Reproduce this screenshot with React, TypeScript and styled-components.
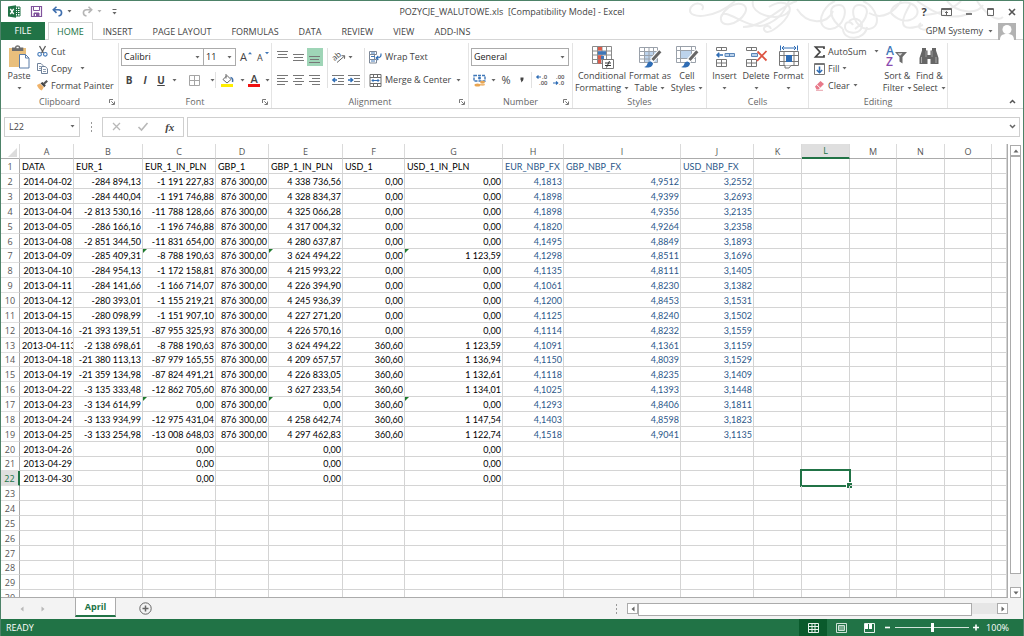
import React from "react";
import styled, { createGlobalStyle, css } from "styled-components";

const GREEN = "#217346";
const INK = "#444444";
const UI = '"Open Sans", "Noto Sans", sans-serif';
const CELL = 'Lato, "Open Sans", sans-serif';

const GlobalStyle = createGlobalStyle`
  * { box-sizing: border-box; }
  body { margin: 0; font-family: ${UI}; font-size: 9px; line-height: 12px; color: ${INK}; background: #fff; }
  button, select, input { font: inherit; color: inherit; margin: 0; padding: 0; border: 0; border-radius: 0; background: none; }
  button { white-space: nowrap; }
  svg { display: block; flex: none; overflow: visible; }
`;

/* ---------- frame ---------- */

const Window = styled.div`
  display: flex;
  flex-direction: column;
  height: 100vh;
  border: 1px solid #4d8268;
  border-bottom: 0;
  overflow: hidden;
`;

const Header = styled.header`
  position: relative;
  flex: none;
`;

const Swirls = styled.svg`
  position: absolute;
  top: 0;
  right: 0;
  overflow: hidden;
  fill: none;
  stroke: #ebebeb;
  stroke-width: 2;
`;

const TitleBar = styled.div`
  position: relative;
  display: grid;
  grid-template-columns: 1fr auto 1fr;
  align-items: center;
  height: 21px;
`;

const QuickAccess = styled.div`
  display: flex;
  align-items: center;
  gap: 10px;
  padding-left: 7px;
`;

const Title = styled.h1`
  margin: 0;
  font-size: 9px;
  line-height: 12px;
  font-weight: 400;
  white-space: pre;
`;

const WindowButtons = styled.div`
  display: flex;
  justify-content: flex-end;
  align-items: center;
  gap: 12px;
  padding-right: 6px;
`;

const BareButton = styled.button`
  display: flex;
  align-items: center;
  justify-content: center;
  gap: 4px;
`;

const HelpButton = styled(BareButton)`
  font-size: 11px;
  font-weight: 700;
  width: 10px;
`;

const TabBar = styled.nav`
  position: relative;
  display: flex;
  height: 18px;
  border-bottom: 1px solid #d5d5d5;
`;

const Tab = styled.button<{ $active?: boolean }>`
  position: relative;
  height: 18px;
  padding: 0 9px;
  line-height: 16px;
  border: 1px solid transparent;
  border-bottom: 0;
  ${(p) => p.$active && css`
    margin-left: 3px;
    padding: 0 8px;
    color: ${GREEN};
    background: #fff;
    border-color: #d5d5d5;
  `}
`;

const FileTab = styled.button`
  width: 44px;
  height: 18px;
  color: #fff;
  background: ${GREEN};
`;

const Account = styled.button`
  display: flex;
  align-items: center;
  gap: 5px;
  margin-left: auto;
  padding-right: 7px;
  height: 18px;
`;

/* ---------- ribbon ---------- */

const Ribbon = styled.section`
  display: grid;
  grid-template-columns: 118px 153px 197px 104px 134px 102px 139px 1fr;
  flex: none;
  height: 69px;
  padding-top: 3px;
  border-bottom: 1px solid #d5d5d5;
`;

const Group = styled.div`
  display: grid;
  grid-template-rows: 52px 13px;
  border-right: 1px solid #e4e4e4;
`;

const GroupFoot = styled.div`
  display: grid;
  grid-template-columns: 12px 1fr 12px;
  align-items: center;
  justify-items: center;
  color: #666;
`;

const GroupTitle = styled.span`
  grid-column: 2;
`;

const Body = styled.div<{ $gap?: number; $pad?: string }>`
  display: flex;
  align-items: flex-start;
  gap: ${(p) => p.$gap ?? 0}px;
  padding: ${(p) => p.$pad ?? "0"};
`;

const Rows = styled.div<{ $gap?: number }>`
  display: flex;
  flex-direction: column;
  gap: ${(p) => p.$gap ?? 0}px;
`;

const Row = styled.div<{ $gap?: number }>`
  display: flex;
  align-items: center;
  height: 18px;
  gap: ${(p) => p.$gap ?? 5}px;
`;

const LabelButton = styled.button`
  display: flex;
  align-items: center;
  gap: 3px;
  height: 17px;
`;

const BigButton = styled.button<{ $w: number }>`
  display: flex;
  flex-direction: column;
  align-items: center;
  width: ${(p) => p.$w}px;
  padding-top: 2px;
  svg + span { margin-top: 1px; }
`;

const Line = styled.span`
  display: flex;
  align-items: center;
  gap: 3px;
  height: 12px;
`;

const Tool = styled.button<{ $w?: number; $on?: boolean }>`
  display: flex;
  align-items: center;
  justify-content: center;
  flex: none;
  width: ${(p) => p.$w ?? 16}px;
  height: 18px;
  background: ${(p) => (p.$on ? "#9fd5b7" : "none")};
`;

const Divider = styled.span<{ $tall?: boolean }>`
  flex: none;
  width: 1px;
  height: ${(p) => (p.$tall ? 40 : 16)}px;
  background: #e1e1e1;
`;

const Picker = styled.label<{ $w: number }>`
  display: grid;
  align-items: center;
  width: ${(p) => p.$w}px;
  height: 18px;
  border: 1px solid #ababab;
  & + & { border-left: 0; }
  select, svg { grid-area: 1 / 1; }
  select { appearance: none; width: 100%; height: 16px; padding-left: 2px; color: #222; outline: 0; }
  svg { justify-self: end; margin-right: 3px; pointer-events: none; }
`;

const Glyph = styled.span<{ $size?: number; $style?: string }>`
  font-size: ${(p) => p.$size ?? 10}px;
  font-weight: ${(p) => (p.$style === "plain" ? 400 : 700)};
  font-style: ${(p) => (p.$style === "italic" ? "italic" : "normal")};
  text-decoration: ${(p) => (p.$style === "underline" ? "underline" : "none")};
`;

const Collapse = styled.button`
  align-self: end;
  justify-self: end;
  padding: 0 7px 4px 0;
`;

/* ---------- formula bar ---------- */

const FormulaBar = styled.div`
  display: flex;
  align-items: center;
  flex: none;
  height: 35px;
  padding: 0 3px;
`;

const NameBox = styled.label`
  display: flex;
  align-items: center;
  width: 76px;
  height: 20px;
  padding: 0 4px;
  border: 1px solid #cfcfcf;
  input { flex: 1; min-width: 0; outline: 0; }
`;

const Dots = styled.span`
  display: flex;
  flex-direction: column;
  align-items: center;
  gap: 2px;
  width: 22px;
  &::before, &::after, i { content: ""; width: 1px; height: 2px; background: #999; }
`;

const FormulaTools = styled.div`
  display: flex;
  align-items: center;
  justify-content: space-around;
  width: 82px;
  height: 20px;
  margin-right: 3px;
  border: 1px solid #cfcfcf;
`;

const Fx = styled.span`
  font: italic 700 11px/12px "Liberation Serif", serif;
`;

const FormulaBox = styled.label`
  display: flex;
  align-items: center;
  flex: 1;
  height: 20px;
  padding: 0 3px 0 6px;
  border: 1px solid #cfcfcf;
  input { flex: 1; min-width: 0; outline: 0; }
`;

/* ---------- sheet ---------- */

const Workspace = styled.main`
  display: grid;
  grid-template-columns: 1fr 15px;
  flex: 1;
  min-height: 0;
`;

const SheetView = styled.div`
  overflow: hidden;
  border-right: 1px solid #ababab;
  border-bottom: 1px solid #ababab;
`;

const Sheet = styled.table`
  width: 100%;
  table-layout: fixed;
  border-collapse: separate;
  border-spacing: 0;
  font-family: ${CELL};
  font-size: 9px;
  color: #000;
`;

const ColHead = styled.th<{ $on?: boolean }>`
  height: 15px;
  padding: 0;
  font: 400 9px/13px ${UI};
  color: ${(p) => (p.$on ? GREEN : "#555")};
  background: ${(p) => (p.$on ? "#dfdfdf" : "#fff")};
  border-right: 1px solid #dadada;
  border-bottom: ${(p) => (p.$on ? `2px solid ${GREEN}` : "1px solid #ababab")};
`;

const RowHead = styled.th<{ $on?: boolean }>`
  padding: 1px 0 0;
  font: 400 9px/13px ${UI};
  color: ${(p) => (p.$on ? GREEN : "#555")};
  background: ${(p) => (p.$on ? "#dfdfdf" : "#fff")};
  border-right: ${(p) => (p.$on ? `2px solid ${GREEN}` : "1px solid #ababab")};
  border-bottom: 1px solid #e0e0e0;
`;

const SheetRow = styled.tr`
  height: 15px;
  line-height: 13px;
  &:nth-child(7n) { height: 14px; }
  &:nth-child(7n) > * { line-height: 12px; }
`;

const Cell = styled.td<{ $blue?: boolean; $left?: boolean }>`
  position: relative;
  padding: 1px 1px 0 2px;
  overflow: hidden;
  white-space: nowrap;
  text-align: ${(p) => (p.$left ? "left" : "right")};
  color: ${(p) => (p.$blue ? "#2c5789" : "#000")};
  border-right: 1px solid #d4d4d4;
  border-bottom: 1px solid #d4d4d4;
`;

const PickedCell = styled(Cell)`
  overflow: visible;
  &::before {
    content: "";
    position: absolute;
    inset: -2px;
    border: 2px solid ${GREEN};
  }
  &::after {
    content: "";
    position: absolute;
    right: -3px;
    bottom: -3px;
    width: 5px;
    height: 5px;
    background: ${GREEN};
    border: 1px solid #fff;
    border-width: 1px 0 0 1px;
  }
`;

const Flag = styled.span`
  position: absolute;
  top: 0;
  left: 0;
  border: 2px solid #1d7a2c;
  border-right-color: transparent;
  border-bottom-color: transparent;
`;

const VScroll = styled.div`
  display: flex;
  flex-direction: column;
  width: 11px;
  margin: 1px 0 0 2px;
  background: #f0f0f0;
`;

const ScrollButton = styled.button`
  display: flex;
  align-items: center;
  justify-content: center;
  flex: none;
  width: 11px;
  height: 11px;
  background: #fff;
  border: 1px solid #ababab;
`;

const VTrack = styled.div`
  flex: 1;
  padding-bottom: 15px;
  &::before { content: ""; display: block; height: 100%; background: #fff; border: 1px solid #ababab; }
`;

const TabStrip = styled.div`
  display: flex;
  align-items: center;
  flex: none;
  height: 21px;
  background: #f3f3f3;
  padding-right: 15px;
`;

const SheetNav = styled.div`
  display: flex;
  gap: 15px;
  width: 74px;
  padding-left: 18px;
`;

const SheetTab = styled.button`
  align-self: flex-start;
  width: 41px;
  height: 19px;
  color: ${GREEN};
  font-size: 9px;
  font-weight: 700;
  background: #fff;
  border: 1px solid #ababab;
  border-top: 0;
  border-bottom: 2px solid ${GREEN};
`;

const AddSheet = styled(BareButton)`
  margin-left: 23px;
`;

const HScrollArea = styled.div`
  display: flex;
  align-items: center;
  width: 403px;
  margin-left: auto;
`;

const HTrack = styled.div`
  flex: 1;
  height: 11px;
  padding-right: 25px;
  background: #e6e6e6;
  &::before { content: ""; display: block; height: 100%; background: #fff; border: 1px solid #ababab; }
`;

const StatusBar = styled.footer`
  display: flex;
  align-items: center;
  flex: none;
  height: 17px;
  margin: 0 -1px;
  padding: 0 15px 0 6px;
  color: #fff;
  background: ${GREEN};
`;

const StatusTools = styled.div`
  display: flex;
  align-items: center;
  margin-left: auto;
`;

const ViewButton = styled.button<{ $on?: boolean }>`
  display: flex;
  align-items: center;
  justify-content: center;
  width: 28px;
  height: 17px;
  background: ${(p) => (p.$on ? "#0a5a2c" : "none")};
`;

const Zoom = styled.input`
  appearance: none;
  width: 74px;
  height: 9px;
  margin: 0 4px;
  background: linear-gradient(#d3e3da, #d3e3da) center / 100% 1px no-repeat;
  &::-webkit-slider-thumb { appearance: none; width: 3px; height: 9px; background: #fff; }
`;

const ZoomValue = styled.span`
  width: 30px;
  text-align: right;
`;

/* ---------- icons ---------- */

const Caret = ({ color = "#666" }: { color?: string }) => (
  <svg width="5" height="3" viewBox="0 0 5 3"><path d="M0.5 0h4L2.5 2.6z" fill={color} /></svg>
);

const Launcher = () => (
  <svg width="6" height="6" viewBox="0 0 6 6" fill="none" stroke="#777" strokeWidth="1">
    <path d="M.5 4V.5H4M2.3 2.3l2.6 2.6M5.5 2.5v3h-3" />
  </svg>
);

const Triangle = ({ dir, color = "#666" }: { dir: "up" | "down" | "left" | "right"; color?: string }) => {
  const turn = { up: 0, right: 90, down: 180, left: 270 }[dir];
  return (
    <svg width="6" height="6" viewBox="0 0 6 6"><path d="M.5 4.5L3 1.500l2.500 3z" fill={color} transform={`rotate(${turn} 3 3)`} /></svg>
  );
};

const ExcelLogo = () => (
  <svg width="13" height="13" viewBox="0 0 13 13">
    <path d="M7 2h5v9H7z" fill="#fff" stroke={GREEN} />
    <path d="M7 4.5h5M7 6.5h5M7 8.5h5M9.5 2v9" stroke={GREEN} />
    <path d="M0 1.5L8 .3v12.4L0 11.5z" fill={GREEN} />
    <path d="M2.3 3.8l3.4 5.4M5.7 3.8L2.3 9.2" stroke="#fff" strokeWidth="1.4" />
  </svg>
);

const SaveIcon = () => (
  <svg width="11" height="11" viewBox="0 0 11 11" fill="none" stroke="#80539c">
    <path d="M.5.5h10v10H.5z" strokeWidth="1.2" /><path d="M2.5.5v4h6v-4" /><path d="M3 10V7h5v3" fill="#80539c" /><path d="M4.5 8v2" stroke="#fff" />
  </svg>
);

const UndoIcon = ({ color, flip }: { color: string; flip?: boolean }) => (
  <svg width="11" height="11" viewBox="0 0 11 11" fill="none" stroke={color} strokeWidth="1.6">
    <g transform={flip ? "matrix(-1 0 0 1 11 0)" : undefined}><path d="M4.5.7L1.3 3.8l3.2 3M1.3 3.8h5c4.4.2 4.3 5.4.2 6.2" /></g>
  </svg>
);

const PasteIcon = () => (
  <svg width="22" height="24" viewBox="0 0 22 24">
    <path d="M1 3h17v19H1z" fill="#e9bf7c" />
    <path d="M4 2.5h3c.3-3 5-3 5.3 0h3V6H4z" fill="#6b6b6b" /><path d="M8.5 1.800h2.200v1.400H8.500z" fill="#fff" />
    <path d="M11.500 9.500h6l3.500 3.500v10h-9.500z" fill="#fff" stroke="#5b7da8" /><path d="M17.500 9.500v3.500H21" fill="none" stroke="#5b7da8" />
  </svg>
);

const CutIcon = () => (
  <svg width="11" height="11" viewBox="0 0 11 11" fill="none">
    <path d="M2.500 0l4 7M8.500 0l-4 7" stroke="#5a5a5a" strokeWidth="1.300" />
    <circle cx="2.600" cy="8.300" r="1.800" stroke="#3f77b8" strokeWidth="1.100" /><circle cx="8.300" cy="8.300" r="1.800" stroke="#3f77b8" strokeWidth="1.100" />
  </svg>
);

const CopyIcon = () => (
  <svg width="11" height="11" viewBox="0 0 11 11" fill="#fff" stroke="#6f829b">
    <path d="M.5.5H4L6 2.500v5H.5z" /><path d="M4.500 3.500h3.700l2.300 2.200v4.800h-6z" /><path d="M2 3.500h2M2 5.500h2M6 6.500h3M6 8.500h3" strokeWidth=".8" />
  </svg>
);

const PainterIcon = () => (
  <svg width="11" height="11" viewBox="0 0 11 11">
    <path d="M0 5l3-1.500 3.800 3.700-2 3.300C2.500 10 .8 7.800 0 5z" fill="#efb269" />
    <path d="M3.500 3.300l2-1.300 3.300 3.300-1.500 2z" fill="#444" /><path d="M7 3.800L10.200.8" stroke="#555" strokeWidth="2.200" />
  </svg>
);

const GrowFont = ({ size, down }: { size: number; down?: boolean }) => (
  <svg width="12" height="12" viewBox="0 0 12 12">
    <text x="0" y="10" fontFamily="Open Sans, sans-serif" fontSize={size} fill="#444">A</text>
    <path d={down ? "M8 1h4l-2 2.200z" : "M8 3.200h4L10 1z"} fill="#3f77b8" />
  </svg>
);

const BordersIcon = () => (
  <svg width="11" height="11" viewBox="0 0 11 11" fill="none" stroke="#a5a5a5"><path d="M.5.5h10v10H.5zM5.500.5v10M.5 5.500h10" /></svg>
);

const FillColorIcon = () => (
  <svg width="13" height="13" viewBox="0 0 13 13">
    <path d="M2 5.500L6 1.500l4 4-4 3.500z" fill="#fff" stroke="#666" /><path d="M5 0v4.500" stroke="#666" /><path d="M9.500 3.500c2.200.4 2.500 2 2 4.500" fill="none" stroke="#3f6fa8" strokeWidth="1.500" />
    <path d="M0 10h12v3H0z" fill="#ffee00" />
  </svg>
);

const FontColorIcon = () => (
  <svg width="13" height="13" viewBox="0 0 13 13">
    <text x="2.500" y="9" fontFamily="Open Sans, sans-serif" fontWeight="600" fontSize="11" fill="#444">A</text><path d="M0 10h12v3H0z" fill="#f01010" />
  </svg>
);

const LinesIcon = ({ rows }: { rows: [number, number, number][] }) => (
  <svg width="12" height="12" viewBox="0 0 12 12" stroke="#777">
    {rows.map(([x1, x2, y]) => <path key={y} d={`M${x1} ${y + 0.5}H${x2}`} />)}
  </svg>
);

const OrientationIcon = () => (
  <svg width="13" height="12" viewBox="0 0 13 12" fill="none" stroke="#666">
    <text x="0" y="8" fontFamily="Open Sans, sans-serif" fontSize="8" fill="#444" stroke="none" transform="rotate(-40 4 7)">ab</text>
    <path d="M4 11.500l7.500-6.500M8.500 4.700l3.200.1-.2 3" />
  </svg>
);

const IndentIcon = ({ more }: { more?: boolean }) => (
  <svg width="12" height="10" viewBox="0 0 12 10" fill="none">
    <path d="M0 .5h12M6 3.500h6M6 6.500h6M0 9.500h12" stroke="#777" />
    <path d={more ? "M0 5h4.500M2.500 3l2.200 2-2.200 2" : "M5 5H.8M3 3L.8 5 3 7"} stroke="#2f6db5" strokeWidth="1.400" />
  </svg>
);

const WrapIcon = () => (
  <svg width="13" height="13" viewBox="0 0 13 13" fill="none">
    <path d="M.5.5h7v3h-7zM.5 8.500h7v3.500h-7zM.5 3.500h5v5h-5z" stroke="#7c8796" fill="#fff" /><path d="M2 2h4M2 5.500h4M2 10h4" stroke="#3f77b8" />
    <path d="M12 2.500c.4 3-1 4.500-4.500 4.500M9.300 5L7.200 7l2.100 2" stroke="#2f6db5" strokeWidth="1.200" />
  </svg>
);

const MergeIcon = () => (
  <svg width="13" height="13" viewBox="0 0 13 13" fill="none">
    <path d="M1 .5h11v12H1zM1 3.500h11M1 9.500h11M4.500.5v3M8.500.5v3M4.500 9.500v3M8.500 9.500v3" stroke="#6c6c6c" />
    <path d="M3 6.500h7M4.500 5L3 6.500 4.500 8M8.500 5L10 6.500 8.500 8" stroke="#2f6db5" />
  </svg>
);

const CurrencyIcon = () => (
  <svg width="13" height="13" viewBox="0 0 13 13">
    <path d="M1 1.500h11v5.500H1z" fill="#fff" stroke="#3f77b8" strokeWidth="1.400" strokeDasharray="3 1" /><circle cx="6.500" cy="4" r="1.500" fill="#3f77b8" />
    <ellipse cx="9.500" cy="8" rx="2.500" ry="1.200" fill="#e8a552" /><ellipse cx="9.500" cy="10.500" rx="2.500" ry="1.200" fill="#efb977" /><ellipse cx="4.500" cy="11" rx="3" ry="1.500" fill="#e8a552" />
  </svg>
);

const DecimalIcon = ({ less }: { less?: boolean }) => (
  <svg width="12" height="12" viewBox="0 0 12 12">
    <g fontFamily="Open Sans, sans-serif" fontWeight="600" fontSize="6" fill="#555">
      <text x={less ? 3 : 6} y="5">{less ? ".00" : ".0"}</text>
      <text x={less ? 6 : 3} y="11">{less ? ".0" : ".00"}</text>
    </g>
    <path d={less ? "M0 9h4.500M3 7.500L4.700 9 3 10.500" : "M5 3H.8M2.500 1.500L.8 3l1.700 1.500"} fill="none" stroke="#2f6db5" strokeWidth="1.200" />
  </svg>
);

const ConditionalIcon = () => (
  <svg width="23" height="24" viewBox="0 0 23 24">
    <path d="M1.500 1.500h19v17h-19zM6.500 1.500v17M11 1.500v17M15.500 1.500v17M1.500 6h19M1.500 10h19M1.500 14.500h19" fill="#fff" stroke="#8a8a8a" />
    <path d="M7 2h4v3.500H7zM7 10.500h4V14H7zM7 14.500h3v4H7z" fill="#dc5b4a" /><path d="M7 6.300h8v3.500H7zM7 11h6v3H7z" fill="#3f77b8" /><path d="M7 10.500h3V14H7z" fill="#dc5b4a" />
    <path d="M11.500 14.500h11v9h-11z" fill="#fff" stroke="#777" /><path d="M14 18h6M14 20.500h6M18.500 16l-3 6.500" stroke="#333" />
  </svg>
);

const Brush = () => (
  <>
    <path d="M22.500 6L14 15.500" stroke="#fff" strokeWidth="5" /><path d="M22.300 6.200L14.500 15" stroke="#666" strokeWidth="3" />
    <path d="M6 22c3-.5 3-3 4-4.500 2-2 4.500-1 5 .5 0 4-4.500 5.500-9 4z" fill="#2f6db5" /><path d="M12.500 15l3 2.500" stroke="#fff" strokeWidth="1.500" />
  </>
);

const TableIcon = () => (
  <svg width="24" height="24" viewBox="0 0 24 24">
    <path d="M1.500 2.500h18v15h-18z" fill="#fff" /><path d="M6.500 6.500h13v11h-13z" fill="#bcd3ec" />
    <path d="M1.500 2.500h18v15h-18zM6.500 2.500v15M11 2.500v15M15.500 2.500v15M1.500 6.500h18M1.500 10.500h18M1.500 14h18" fill="none" stroke="#9aa1aa" />
    <Brush />
  </svg>
);

const CellStylesIcon = () => (
  <svg width="24" height="24" viewBox="0 0 24 24">
    <path d="M1.500 1.500h19v16h-19zM5.500 1.500v16M16.500 1.500v16M1.500 5.500h19M1.500 13.500h19" fill="#fff" stroke="#9aa1aa" /><path d="M6 6h10v7H6z" fill="#bcd3ec" />
    <Brush />
  </svg>
);

const InsertIcon = () => (
  <svg width="22" height="24" viewBox="0 0 22 24" fill="#fff" stroke="#777">
    <path d="M2.500 2.500h10v3h-10zM7.500 2.500v3M2.500 14.500h10v7h-10zM7.500 14.500v7M2.500 18h10" />
    <path d="M11 8.500h9.500v3H11zM15.500 8.500v3" fill="#bcd3ec" stroke="#5b86b8" /><path d="M9 10H3M5.300 7.700L3 10l2.300 2.300" fill="none" stroke="#2f6db5" strokeWidth="1.500" />
  </svg>
);

const DeleteIcon = () => (
  <svg width="24" height="24" viewBox="0 0 24 24" fill="#fff" stroke="#777">
    <path d="M2.500 2.500h10v3h-10zM7.500 2.500v3M2.500 14.500h10v7h-10zM7.500 14.500v7M2.500 18h10" />
    <path d="M7.500 8.500h6v3h-6z" fill="#bcd3ec" stroke="#5b86b8" /><path d="M13.500 6.500l9 9M22.500 6l-9.500 10" fill="none" stroke="#dd5442" strokeWidth="1.800" />
  </svg>
);

const FormatIcon = () => (
  <svg width="24" height="24" viewBox="0 0 24 24" fill="#fff" stroke="#777">
    <path d="M2.500 6.500h19v14h-19zM7 6.500v14M17 6.500v14M2.500 10.500h19M2.500 16.500h19" /><path d="M9 10h6v7H9z" fill="#2f6db5" stroke="none" />
    <path d="M8 20.500v2.500h4l2-2.500" /><path d="M3.500.5v5M20.500.5v5M5 3h14M7 1L5 3l2 2M17 1l2 2-2 2" fill="none" stroke="#2f6db5" />
  </svg>
);

const SigmaIcon = () => (
  <svg width="11" height="12" viewBox="0 0 11 12" fill="none" stroke="#444" strokeWidth="1.700"><path d="M10 3V1H1.500l4.500 5-4.500 5H10V9" /></svg>
);

const FillIcon = () => (
  <svg width="11" height="12" viewBox="0 0 11 12" fill="none"><path d="M.5.5h10v11H.5z" stroke="#777" /><path d="M0 1.500h11" stroke="#777" /><path d="M5.500 3.500V10M2.800 7l2.700 2.700L8.200 7" stroke="#2f6db5" strokeWidth="1.500" /></svg>
);

const ClearIcon = () => (
  <svg width="11" height="11" viewBox="0 0 11 11"><path d="M1 6.500L6.500 1 10 4 4.500 9.500H2.500z" fill="#e8798a" /><path d="M2.800 4.700l3.500 3.300" stroke="#fff" /><path d="M2 10.300h7" stroke="#e8a0aa" /></svg>
);

const SortIcon = () => (
  <svg width="24" height="24" viewBox="0 0 24 24">
    <g fontFamily="Open Sans, sans-serif" fontWeight="600" fontSize="12"><text x="1" y="10" fill="#3f77b8">A</text><text x="1" y="21" fill="#8a4bb0">Z</text></g>
    <path d="M10 7h12l-4.500 5v6.500l-3-2V12z" fill="#6b6b6b" /><path d="M12.500 8.200h5L15 10.800z" fill="#ddd" />
  </svg>
);

const FindIcon = () => (
  <svg width="22" height="24" viewBox="0 0 22 24" fill="#666">
    <path d="M4 3h4v2.500h1.500V10h3V5.500H14V3h4v2.500l2.500 7.500v6h-8v-5h-3v5h-8v-6L4 5.500z" /><path d="M3.500 12v6M18 12v6" stroke="#aaa" /><path d="M8 6v6M14 6v6" stroke="#999" />
  </svg>
);

/* ---------- data ---------- */

const columns: [string, number | undefined][] = [
  ["A", 54], ["B", 69], ["C", 73], ["D", 53], ["E", 74], ["F", 62], ["G", 98], ["H", 61],
  ["I", 117], ["J", 73], ["K", 48], ["L", 48], ["M", 47], ["N", 48], ["O", 47], ["", undefined],
];

const P = "876 300,00";
const records: string[][] = [
  ["DATA", "EUR_1", "EUR_1_IN_PLN", "GBP_1", "GBP_1_IN_PLN", "USD_1", "USD_1_IN_PLN", "EUR_NBP_FX", "GBP_NBP_FX", "USD_NBP_FX"],
  ["2014-04-02", "-284 894,13", "-1 191 227,83", P, "4 338 736,56", "0,00", "0,00", "4,1813", "4,9512", "3,2552"],
  ["2013-04-03", "-284 440,04", "-1 191 746,88", P, "4 328 834,37", "0,00", "0,00", "4,1898", "4,9399", "3,2693"],
  ["2013-04-04", "-2 813 530,16", "-11 788 128,66", P, "4 325 066,28", "0,00", "0,00", "4,1898", "4,9356", "3,2135"],
  ["2013-04-05", "-286 166,16", "-1 196 746,88", P, "4 317 004,32", "0,00", "0,00", "4,1820", "4,9264", "3,2358"],
  ["2013-04-08", "-2 851 344,50", "-11 831 654,00", P, "4 280 637,87", "0,00", "0,00", "4,1495", "4,8849", "3,1893"],
  ["2013-04-09", "-285 409,31", "-8 788 190,63", P, "3 624 494,22", "0,00", "1 123,59", "4,1298", "4,8511", "3,1696"],
  ["2013-04-10", "-284 954,13", "-1 172 158,81", P, "4 215 993,22", "0,00", "0,00", "4,1135", "4,8111", "3,1405"],
  ["2013-04-11", "-284 141,66", "-1 166 714,07", P, "4 226 394,90", "0,00", "0,00", "4,1061", "4,8230", "3,1382"],
  ["2013-04-12", "-280 393,01", "-1 155 219,21", P, "4 245 936,39", "0,00", "0,00", "4,1200", "4,8453", "3,1531"],
  ["2013-04-15", "-280 098,99", "-1 151 907,10", P, "4 227 271,20", "0,00", "0,00", "4,1125", "4,8240", "3,1502"],
  ["2013-04-16", "-21 393 139,51", "-87 955 325,93", P, "4 226 570,16", "0,00", "0,00", "4,1114", "4,8232", "3,1559"],
  ["2013-04-113", "-2 138 698,61", "-8 788 190,63", P, "3 624 494,22", "360,60", "1 123,59", "4,1091", "4,1361", "3,1159"],
  ["2013-04-18", "-21 380 113,13", "-87 979 165,55", P, "4 209 657,57", "360,60", "1 136,94", "4,1150", "4,8039", "3,1529"],
  ["2013-04-19", "-21 359 134,98", "-87 824 491,21", P, "4 226 833,05", "360,60", "1 132,61", "4,1118", "4,8235", "3,1409"],
  ["2013-04-22", "-3 135 333,48", "-12 862 705,60", P, "3 627 233,54", "360,60", "1 134,01", "4,1025", "4,1393", "3,1448"],
  ["2013-04-23", "-3 134 614,99", "0,00", P, "0,00", "360,60", "0,00", "4,1293", "4,8406", "3,1811"],
  ["2013-04-24", "-3 133 934,99", "-12 975 431,04", P, "4 258 642,74", "360,60", "1 147,54", "4,1403", "4,8598", "3,1823"],
  ["2013-04-25", "-3 133 254,98", "-13 008 648,03", P, "4 297 462,83", "360,60", "1 122,74", "4,1518", "4,9041", "3,1135"],
  ["2013-04-26", "", "0,00", "", "0,00", "", "0,00"],
  ["2013-04-29", "", "0,00", "", "0,00", "", "0,00"],
  ["2013-04-30", "", "0,00", "", "0,00", "", "0,00"],
];
const ROW_COUNT = 30;
const flaggedRows = [7, 17];
const flaggedColumns = ["C", "E", "G"];

const tabs = ["INSERT", "PAGE LAYOUT", "FORMULAS", "DATA", "REVIEW", "VIEW", "ADD-INS"];

const RibbonGroup = ({ title, launcher, children }: { title: string; launcher?: boolean; children: React.ReactNode }) => (
  <Group role="group" aria-label={title}>
    {children}
    <GroupFoot>
      <GroupTitle>{title}</GroupTitle>
      {launcher && <BareButton aria-label={`${title} settings`}><Launcher /></BareButton>}
    </GroupFoot>
  </Group>
);

const Big = ({ w, icon, top, bottom }: { w: number; icon: React.ReactNode; top: string; bottom?: string }) => (
  <BigButton $w={w}>
    {icon}
    <Line>{top}</Line>
    <Line>{bottom}<Caret /></Line>
  </BigButton>
);

export default function App() {
  return (
    <>
      <GlobalStyle />
      <Window>
        <Header>
          <Swirls width="338" height="38" viewBox="0 0 338 38" aria-hidden="true">
            <path d="M50 0C30 18 4 18 5 9S22 1 17 9" />
            <path d="M36 16C44-2 66 0 60 12S34 28 36 16s28 14 44 8S100 8 104 0" />
            <path d="M68 0c-4 14 28 22 36 10M84 6c12-8 24-4 20 6S84 34 80 30s4-8 6-2" />
            <path d="M58 26C80 26 96 4 112 0M112 8c10 16 30 16 36 2" />
            <path d="M150 0c-14 6-20 26-6 28s22-24 10-24-10 14 4 24M178 0c14 6 20 26 6 28s-22-24-10-24 10 14-4 24" />
            <path d="M164 20c8-6 16 2 12 8s-16 4-16-2 6-6 8-2M158 28c0 12 22 12 24-2" />
            <path d="M184 12c14 8 26-2 32-12M206 12c0-12 22-14 26-4s-14 18-26 4" />
            <path d="M226 2c-16 26-6 28 12 22M232 0c20 14 34 20 54 12M246 26c-8 6-16 0-10-4" />
            <path d="M262 0c10 12 30 14 36 4M292 0c8 12 20 22 26 16M240 14c20-2 30-8 36-14" />
          </Swirls>
          <TitleBar>
            <QuickAccess>
              <ExcelLogo />
              <BareButton aria-label="Save"><SaveIcon /></BareButton>
              <BareButton aria-label="Undo"><UndoIcon color="#3f6fae" /><Caret /></BareButton>
              <BareButton aria-label="Redo"><UndoIcon color="#b5b5b5" flip /><Caret color="#b5b5b5" /></BareButton>
              <BareButton aria-label="Customize toolbar">
                <svg width="5" height="6" viewBox="0 0 5 6"><path d="M.5.5h4" stroke="#666" /><path d="M.5 3h4L2.500 5.500z" fill="#666" /></svg>
              </BareButton>
            </QuickAccess>
            <Title>POZYCJE_WALUTOWE.xls  [Compatibility Mode] - Excel</Title>
            <WindowButtons>
              <HelpButton>?</HelpButton>
              <BareButton aria-label="Ribbon display options">
                <svg width="11" height="8" viewBox="0 0 11 8" fill="none" stroke="#666"><path d="M.5.5h10v7H.5zM.5 1.500h10M5.500 7V3.500M4 5l1.500-1.500L7 5" /></svg>
              </BareButton>
              <BareButton aria-label="Minimize"><svg width="10" height="8" viewBox="0 0 10 8"><path d="M2 6h6" stroke="#555" strokeWidth="1.500" /></svg></BareButton>
              <BareButton aria-label="Maximize"><svg width="9" height="8" viewBox="0 0 9 8" fill="none" stroke="#666"><path d="M1.500.5h6v7h-6zM1 1.500h7" /></svg></BareButton>
              <BareButton aria-label="Close"><svg width="10" height="8" viewBox="0 0 10 8" stroke="#555" strokeWidth="1.600"><path d="M2 1l6 6M8 1L2 7" /></svg></BareButton>
            </WindowButtons>
          </TitleBar>
          <TabBar>
            <FileTab>FILE</FileTab>
            <Tab $active>HOME</Tab>
            {tabs.map((t) => <Tab key={t}>{t}</Tab>)}
            <Account>
              GPM Systemy <Caret />
              <svg width="18" height="17" viewBox="0 0 18 17"><path d="M0 0h18v17H0z" fill="#b3b3b3" /><circle cx="9" cy="6.500" r="4.500" fill="#fff" /><path d="M2 17c0-5 3-5.500 5-6h4c2 .5 5 1 5 6z" fill="#fff" /></svg>
            </Account>
          </TabBar>
        </Header>

        <Ribbon>
          <RibbonGroup title="Clipboard" launcher>
            <Body $pad="0 0 0 3px" $gap={3}>
              <Big w={30} icon={<PasteIcon />} top="Paste" />
              <Rows>
                <LabelButton><CutIcon />Cut</LabelButton>
                <LabelButton><CopyIcon />Copy&nbsp;&nbsp;<Caret /></LabelButton>
                <LabelButton><PainterIcon />Format Painter</LabelButton>
              </Rows>
            </Body>
          </RibbonGroup>

          <RibbonGroup title="Font" launcher>
            <Body $pad="5px 0 0 2px">
              <Rows $gap={5}>
                <Row $gap={0}>
                  <Picker $w={83}><select aria-label="Font"><option>Calibri</option></select><Caret /></Picker>
                  <Picker $w={32}><select aria-label="Font size"><option>11</option></select><Caret /></Picker>
                  <Tool $w={20} aria-label="Increase font size"><GrowFont size={11} /></Tool>
                  <Tool $w={14} aria-label="Decrease font size"><GrowFont size={9} down /></Tool>
                </Row>
                <Row $gap={0}>
                  <Tool aria-label="Bold"><Glyph>B</Glyph></Tool>
                  <Tool aria-label="Italic"><Glyph $style="italic">I</Glyph></Tool>
                  <Tool aria-label="Underline"><Glyph $style="underline">U</Glyph></Tool>
                  <Tool $w={10} aria-label="Underline styles"><Caret /></Tool>
                  <Tool $w={30} aria-label="Borders"><BordersIcon /></Tool>
                  <Tool $w={6} aria-label="Border styles"><Caret /></Tool>
                  <Divider />
                  <Tool $w={23} aria-label="Fill color"><FillColorIcon /></Tool>
                  <Tool $w={6} aria-label="Fill colors"><Caret /></Tool>
                  <Tool $w={19} aria-label="Font color"><FontColorIcon /></Tool>
                  <Tool $w={6} aria-label="Font colors"><Caret /></Tool>
                </Row>
              </Rows>
            </Body>
          </RibbonGroup>

          <RibbonGroup title="Alignment" launcher>
            <Body $pad="5px 0 0 3px" $gap={4}>
              <Rows $gap={5}>
                <Row $gap={0}>
                  <Tool aria-label="Top align"><LinesIcon rows={[[0, 11, 0], [1, 10, 3], [0, 11, 6]]} /></Tool>
                  <Tool aria-label="Middle align"><LinesIcon rows={[[0, 11, 3], [1, 10, 6], [0, 11, 9]]} /></Tool>
                  <Tool $on aria-label="Bottom align"><LinesIcon rows={[[0, 11, 5], [1, 10, 8], [0, 11, 11]]} /></Tool>
                </Row>
                <Row $gap={0}>
                  <Tool aria-label="Align left"><LinesIcon rows={[[0, 11, 1], [0, 8, 4], [0, 11, 7], [0, 8, 10]]} /></Tool>
                  <Tool aria-label="Center"><LinesIcon rows={[[0, 11, 1], [2, 9, 4], [0, 11, 7], [2, 9, 10]]} /></Tool>
                  <Tool aria-label="Align right"><LinesIcon rows={[[0, 11, 1], [3, 11, 4], [0, 11, 7], [3, 11, 10]]} /></Tool>
                </Row>
              </Rows>
              <Divider $tall />
              <Rows $gap={5}>
                <Row $gap={2}><Tool $w={14} aria-label="Orientation"><OrientationIcon /></Tool><Caret /></Row>
                <Row $gap={4}><Tool $w={12} aria-label="Decrease indent"><IndentIcon /></Tool><Tool $w={12} aria-label="Increase indent"><IndentIcon more /></Tool></Row>
              </Rows>
              <Divider $tall />
              <Rows $gap={5}>
                <Row><LabelButton><WrapIcon />Wrap Text</LabelButton></Row>
                <Row><LabelButton><MergeIcon />Merge &amp; Center</LabelButton><Caret /></Row>
              </Rows>
            </Body>
          </RibbonGroup>

          <RibbonGroup title="Number" launcher>
            <Body $pad="5px 0 0 2px">
              <Rows $gap={5}>
                <Picker $w={98}><select aria-label="Number format"><option>General</option></select><Caret /></Picker>
                <Row $gap={2}>
                  <Tool aria-label="Currency"><CurrencyIcon /></Tool>
                  <Tool $w={8} aria-label="Currencies"><Caret /></Tool>
                  <Tool $w={14} aria-label="Percent"><Glyph $style="plain" $size={11}>%</Glyph></Tool>
                  <Tool $w={14} aria-label="Comma style"><svg width="4" height="6" viewBox="0 0 4 6"><path d="M.5.5h3c.3 2-.7 4-2.500 5C1.300 4.500 1.500 3.500.5 3z" fill="#444" /></svg></Tool>
                  <Divider />
                  <Tool aria-label="Increase decimal"><DecimalIcon /></Tool>
                  <Tool $w={14} aria-label="Decrease decimal"><DecimalIcon less /></Tool>
                </Row>
              </Rows>
            </Body>
          </RibbonGroup>

          <RibbonGroup title="Styles">
            <Body $pad="0 0 0 2px">
              <Big w={54} icon={<ConditionalIcon />} top="Conditional" bottom="Formatting" />
              <Big w={42} icon={<TableIcon />} top="Format as" bottom="Table" />
              <Big w={32} icon={<CellStylesIcon />} top="Cell" bottom="Styles" />
            </Body>
          </RibbonGroup>

          <RibbonGroup title="Cells">
            <Body $pad="0 0 0 2px">
              <Big w={31} icon={<InsertIcon />} top="Insert" />
              <Big w={32} icon={<DeleteIcon />} top="Delete" />
              <Big w={33} icon={<FormatIcon />} top="Format" />
            </Body>
          </RibbonGroup>

          <RibbonGroup title="Editing">
            <Body $pad="0 0 0 5px" $gap={2}>
              <Rows>
                <LabelButton><SigmaIcon />AutoSum&nbsp;&nbsp;<Caret /></LabelButton>
                <LabelButton><FillIcon />Fill<Caret /></LabelButton>
                <LabelButton><ClearIcon />Clear<Caret /></LabelButton>
              </Rows>
              <Body>
                <Big w={32} icon={<SortIcon />} top="Sort &amp;" bottom="Filter" />
                <Big w={32} icon={<FindIcon />} top="Find &amp;" bottom="Select" />
              </Body>
            </Body>
          </RibbonGroup>
          <Collapse aria-label="Collapse ribbon"><svg width="7" height="5" viewBox="0 0 7 5" fill="none" stroke="#555" strokeWidth="1.500"><path d="M1 4l2.500-2.500L6 4" /></svg></Collapse>
        </Ribbon>

        <FormulaBar>
          <NameBox><input aria-label="Name box" defaultValue="L22" /><Caret /></NameBox>
          <Dots><i /></Dots>
          <FormulaTools>
            <BareButton aria-label="Cancel"><svg width="9" height="9" viewBox="0 0 9 9" stroke="#b8b8b8" strokeWidth="1.300"><path d="M1 1l7 7M8 1L1 8" /></svg></BareButton>
            <BareButton aria-label="Enter"><svg width="10" height="9" viewBox="0 0 10 9" fill="none" stroke="#b8b8b8" strokeWidth="1.600"><path d="M.5 5l3 3 6-7" /></svg></BareButton>
            <BareButton aria-label="Insert function"><Fx>fx</Fx></BareButton>
          </FormulaTools>
          <FormulaBox>
            <input aria-label="Formula" />
            <svg width="7" height="5" viewBox="0 0 7 5" fill="none" stroke="#666" strokeWidth="1.500"><path d="M1 1l2.500 2.500L6 1" /></svg>
          </FormulaBox>
        </FormulaBar>

        <Workspace>
          <SheetView>
            <Sheet>
              <colgroup>
                <col width={19} />
                {columns.map(([name, w]) => <col key={name} width={w} />)}
              </colgroup>
              <thead>
                <tr>
                  <ColHead aria-label="Select all">
                    <svg width="17" height="13" viewBox="0 0 17 13"><path d="M16 3v9H7z" fill="#dcdcdc" /></svg>
                  </ColHead>
                  {columns.map(([name]) => <ColHead key={name} scope="col" $on={name === "L"}>{name}</ColHead>)}
                </tr>
              </thead>
              <tbody>
                {Array.from({ length: ROW_COUNT }, (_, i) => {
                  const n = i + 1;
                  return (
                    <SheetRow key={n}>
                      <RowHead scope="row" $on={n === 22}>{n}</RowHead>
                      {columns.map(([name], c) => {
                        if (n === 22 && name === "L") return <PickedCell key={name} />;
                        const text = records[i]?.[c];
                        return (
                          <Cell key={name} $blue={c > 6} $left={n === 1 || text === "2013-04-113"}>
                            {flaggedRows.includes(n) && flaggedColumns.includes(name) && <Flag />}
                            {text}
                          </Cell>
                        );
                      })}
                    </SheetRow>
                  );
                })}
              </tbody>
            </Sheet>
          </SheetView>
          <VScroll>
            <ScrollButton aria-label="Scroll up"><Triangle dir="up" /></ScrollButton>
            <VTrack />
            <ScrollButton aria-label="Scroll down"><Triangle dir="down" /></ScrollButton>
          </VScroll>
        </Workspace>

        <TabStrip>
          <SheetNav>
            <BareButton aria-label="Previous sheet"><Triangle dir="left" color="#b8b8b8" /></BareButton>
            <BareButton aria-label="Next sheet"><Triangle dir="right" color="#b8b8b8" /></BareButton>
          </SheetNav>
          <SheetTab>April</SheetTab>
          <AddSheet aria-label="New sheet">
            <svg width="13" height="13" viewBox="0 0 13 13" fill="none" stroke="#666"><circle cx="6.500" cy="6.500" r="5.700" /><path d="M6.500 3.500v6M3.500 6.500h6" strokeWidth="1.500" /></svg>
          </AddSheet>
          <HScrollArea>
            <Dots><i /></Dots>
            <ScrollButton aria-label="Scroll left"><Triangle dir="left" /></ScrollButton>
            <HTrack />
            <ScrollButton aria-label="Scroll right"><Triangle dir="right" /></ScrollButton>
          </HScrollArea>
        </TabStrip>

        <StatusBar>
          READY
          <StatusTools>
            <ViewButton $on aria-label="Normal view"><svg width="11" height="10" viewBox="0 0 11 10" fill="none" stroke="#e8f2ec"><path d="M.5.5h10v9H.5zM4 .5v9M7 .5v9M.5 3.500h10M.5 6.500h10" /></svg></ViewButton>
            <ViewButton aria-label="Page layout view"><svg width="11" height="10" viewBox="0 0 11 10" fill="none" stroke="#cfe2d7"><path d="M.5.5h10v9H.5zM2.500 2.500h6v5h-6zM3 4h5M3 6h5" /></svg></ViewButton>
            <ViewButton aria-label="Page break view"><svg width="11" height="10" viewBox="0 0 11 10"><path d="M.5.5h10v9H.5z" fill="none" stroke="#e8f2ec" /><path d="M1 1h3v5H1zM5 1h3v5H5z" fill="#fff" /></svg></ViewButton>
            <BareButton aria-label="Zoom out"><svg width="8" height="7" viewBox="0 0 8 7" stroke="#fff" strokeWidth="1.600"><path d="M2 3.500h5" /></svg></BareButton>
            <Zoom type="range" min={10} max={190} defaultValue={100} aria-label="Zoom" />
            <BareButton aria-label="Zoom in"><svg width="6" height="7" viewBox="0 0 6 7" stroke="#fff" strokeWidth="1.600"><path d="M0 3.500h6M3 .5v6" /></svg></BareButton>
            <ZoomValue>100%</ZoomValue>
          </StatusTools>
        </StatusBar>
      </Window>
    </>
  );
}
